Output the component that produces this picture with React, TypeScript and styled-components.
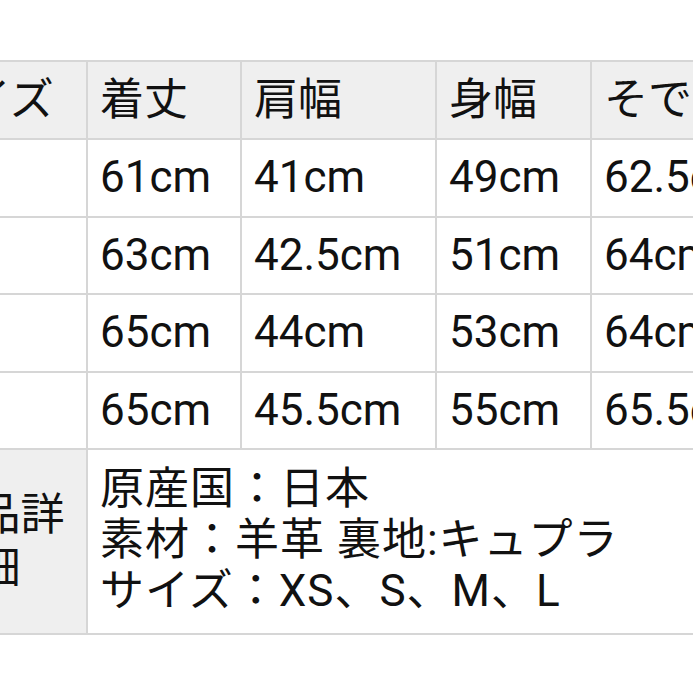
import React from 'react';
import styled, { createGlobalStyle } from 'styled-components';

const GlobalStyle = createGlobalStyle`
  html, body {
    margin: 0;
    padding: 0;
    background: #fff;
  }
  body {
    font-family: Roboto, "Noto Sans CJK JP", sans-serif;
    color: #111;
  }
`;

const Page = styled.div`
  width: 693px;
  height: 693px;
  overflow: hidden;
  padding-top: 60px;
  box-sizing: border-box;
`;

// the table is wider than the shot: the size column starts off the left edge
const Table = styled.table`
  margin-left: -91px;
  border-collapse: collapse;
  table-layout: fixed;
  width: 850px;
  font-size: 44px;
  line-height: 51px;
`;

const Col = styled.col<{ $w: number }>`
  width: ${(p) => p.$w}px;
`;

const HeadCell = styled.th`
  height: 76px;
  padding: 0 12px;
  background: #efefef;
  border: 2px solid #d6d6d6;
  font-weight: 400;
  text-align: left;
  white-space: nowrap;
`;

const Cell = styled.td`
  height: 75.5px;
  padding: 0 12px;
  border: 2px solid #d6d6d6;
  white-space: nowrap;
`;

const DetailRow = styled.tr`
  & > * {
    border-top: 3px solid #d4d4d4;
  }
`;

const DetailLabel = styled.th`
  padding: 0 12px;
  background: #efefef;
  border: 2px solid #d6d6d6;
  font-weight: 400;
  text-align: center;
  line-height: 53px;
`;

const DetailCell = styled.td`
  padding: 14px 12px 16px;
  border: 2px solid #d6d6d6;
  white-space: nowrap;
  letter-spacing: 1px;
`;

const widths = [177, 154, 195, 155, 169];

const columns = ['着丈', '肩幅', '身幅', 'そで丈'];

const rows = [
  { size: 'XS', values: ['61cm', '41cm', '49cm', '62.5cm'] },
  { size: 'S', values: ['63cm', '42.5cm', '51cm', '64cm'] },
  { size: 'M', values: ['65cm', '44cm', '53cm', '64cm'] },
  { size: 'L', values: ['65cm', '45.5cm', '55cm', '65.5cm'] },
];

export default function App() {
  return (
    <Page>
      <GlobalStyle />
      <Table>
        <colgroup>
          {widths.map((w, i) => (
            <Col key={i} $w={w} />
          ))}
        </colgroup>
        <thead>
          <tr>
            <HeadCell>サイズ</HeadCell>
            {columns.map((c) => (
              <HeadCell key={c}>{c}</HeadCell>
            ))}
          </tr>
        </thead>
        <tbody>
          {rows.map((r) => (
            <tr key={r.size}>
              <Cell>{r.size}</Cell>
              {r.values.map((v, i) => (
                <Cell key={i}>{v}</Cell>
              ))}
            </tr>
          ))}
          <DetailRow>
            <DetailLabel>商品詳細</DetailLabel>
            <DetailCell colSpan={4}>
              原産国：日本
              <br />
              素材：羊革 裏地:キュプラ
              <br />
              サイズ：XS、S、M、L
            </DetailCell>
          </DetailRow>
        </tbody>
      </Table>
    </Page>
  );
}
